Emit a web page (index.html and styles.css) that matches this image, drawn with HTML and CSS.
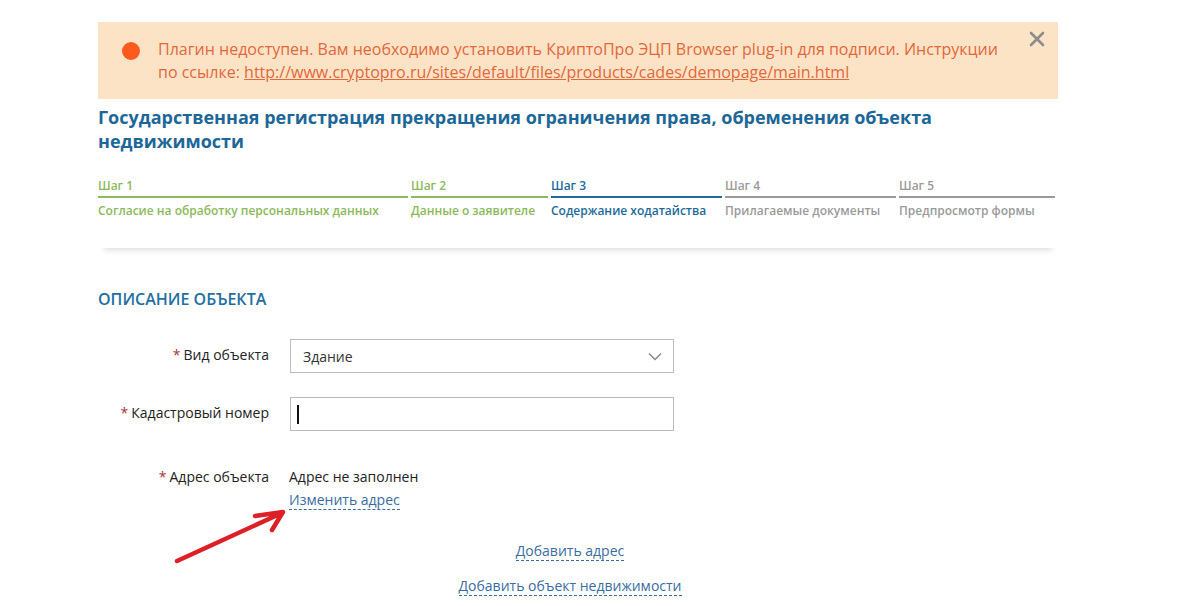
FILE: index.html
```html
<!DOCTYPE html>
<html lang="ru">
<head>
	<meta charset="UTF-8" />
	<title>Прекращение ограничения права</title>
	<link rel="stylesheet" href="styles.css">
</head>
<body>

<div class="page">

	<div class="alert">
		<span class="alertDot"></span>
		<div class="alertText">
			Плагин недоступен. Вам необходимо установить КриптоПро ЭЦП Browser plug-in для подписи. Инструкции
			по ссылке: <a href="#">http://www.cryptopro.ru/sites/default/files/products/cades/demopage/main.html</a>
		</div>
		<svg class="alertClose" width="16" height="16" viewBox="0 0 16 16">
			<path d="M2 2 L14 14 M14 2 L2 14" stroke="#8c8c8c" stroke-width="2.6" stroke-linecap="round" />
		</svg>
	</div>

	<div class="panel">
		<h1 class="title">Государственная регистрация прекращения ограничения права, обременения объекта недвижимости</h1>

		<div class="steps">
			<div class="step done s1">
				<div class="stepNum">Шаг 1</div>
				<div class="stepName">Согласие на обработку персональных данных</div>
			</div>
			<div class="step done s2">
				<div class="stepNum">Шаг 2</div>
				<div class="stepName">Данные о заявителе</div>
			</div>
			<div class="step current s3">
				<div class="stepNum">Шаг 3</div>
				<div class="stepName">Содержание ходатайства</div>
			</div>
			<div class="step s4">
				<div class="stepNum">Шаг 4</div>
				<div class="stepName">Прилагаемые документы</div>
			</div>
			<div class="step s5">
				<div class="stepNum">Шаг 5</div>
				<div class="stepName">Предпросмотр формы</div>
			</div>
		</div>
	</div>

	<h2 class="section">ОПИСАНИЕ ОБЪЕКТА</h2>

	<div class="form">
		<div class="row">
			<div class="label"><span class="req">*</span>Вид объекта</div>
			<div class="field select">
				<span>Здание</span>
				<svg width="14" height="9" viewBox="0 0 14 9">
					<path d="M1 1.5 L7 7.5 L13 1.5" fill="none" stroke="#8a8a8a" stroke-width="1.5" />
				</svg>
			</div>
		</div>

		<div class="row">
			<div class="label"><span class="req">*</span>Кадастровый номер</div>
			<div class="field"><span class="caret"></span></div>
		</div>

		<div class="row addr">
			<div class="label"><span class="req">*</span>Адрес объекта</div>
			<div class="addrValue">
				<div>Адрес не заполнен</div>
				<a class="dashed" href="#">Изменить адрес</a>
			</div>
		</div>

		<div class="links">
			<a class="dashed" href="#">Добавить адрес</a>
			<a class="dashed" href="#">Добавить объект недвижимости</a>
		</div>
	</div>

</div>

<svg class="mark" width="140" height="80" viewBox="160 500 140 80">
	<path d="M177 561 L282 513 M255 516 L283 512 L272 530" fill="none" stroke="#dc2027" stroke-width="4.5" stroke-linecap="round" stroke-linejoin="round" />
</svg>

</body>
</html>
```

FILE: styles.css
```css
body {
	margin: 0;
	background: #fff;
	font-family: "Open Sans", "Liberation Sans", sans-serif;
	font-size: 14px;
	color: #333;
	position: relative;
}
.page {
	width: 960px;
	margin-left: 98px;
	padding-top: 22px;
}

/* bandeau plugin */
.alert {
	position: relative;
	display: flex;
	align-items: flex-start;
	background: #fde3c6;
	padding: 16px 50px 15px 24px;
	color: #e1683b;
	font-size: 16px;
	line-height: 23px;
}
.alertDot {
	flex: none;
	width: 18px;
	height: 18px;
	border-radius: 50%;
	background: #fd5a1e;
	margin: 4px 18px 0 0;
}
.alertText a {
	color: #e1683b;
	text-decoration: underline;
}
.alertClose {
	position: absolute;
	top: 9px;
	right: 13px;
}

/* titre + etapes */
.panel {
	padding: 6px 0 29px;
	box-shadow: 0 8px 6px -6px rgba(0,0,0,0.14);
}
.title {
	margin: 0;
	font-size: 18px;
	line-height: 24px;
	font-weight: 700;
	color: #1c6797;
	width: 860px;
}
.steps {
	display: flex;
	gap: 3px;
	margin-top: 25px;
	font-size: 12px;
	font-weight: 600;
	line-height: 16px;
}
.step {
	color: #9a9a9a;
}
.stepNum {
	padding-bottom: 2px;
	border-bottom: 2px solid #9a9a9a;
}
.stepName {
	padding-top: 5px;
}
.step.done { color: #8cb95b; }
.step.done .stepNum { border-color: #8cb95b; }
.step.current { color: #1e6a9a; }
.step.current .stepNum { border-color: #1e6a9a; }
.s1 { width: 310px; }
.s2 { width: 137px; }
.s3 { width: 171px; }
.s4 { width: 171px; }
.s5 { width: 156px; }

/* formulaire */
.section {
	margin: 40px 0 0;
	font-size: 16px;
	line-height: 22px;
	font-weight: 600;
	color: #236fa1;
}
.form {
	margin-top: 29px;
}
.row {
	display: flex;
	align-items: flex-start;
	gap: 21px;
	margin-bottom: 24px;
}
.label {
	width: 171px;
	text-align: right;
	line-height: 20px;
	padding-top: 6px;
	color: #222;
}
.req {
	color: #a8353a;
	margin-right: 3px;
}
.field {
	box-sizing: border-box;
	width: 384px;
	height: 34px;
	border: 1px solid #bcbcbc;
	display: flex;
	align-items: center;
	padding: 0 11px 0 6px;
}
.select {
	justify-content: space-between;
	padding-left: 12px;
	color: #333;
}
.caret {
	width: 2px;
	height: 19px;
	background: #111;
}
.row.addr {
	margin-top: 36px;
	margin-bottom: 0;
}
.row.addr .label {
	padding-top: 0;
}
.addrValue {
	line-height: 20px;
	margin-left: -1px;
	color: #222;
}
.addrValue .dashed {
	display: inline-block;
	margin-top: 4px;
}
.dashed {
	color: #3a6c9f;
	text-decoration: none;
	border-bottom: 1px dashed #3a6c9f;
	line-height: 18px;
}
.links {
	width: 944px;
	display: flex;
	flex-direction: column;
	align-items: center;
	gap: 16px;
	margin-top: 32px;
}

/* fleche d'annotation */
.mark {
	position: absolute;
	left: 160px;
	top: 500px;
}
```
